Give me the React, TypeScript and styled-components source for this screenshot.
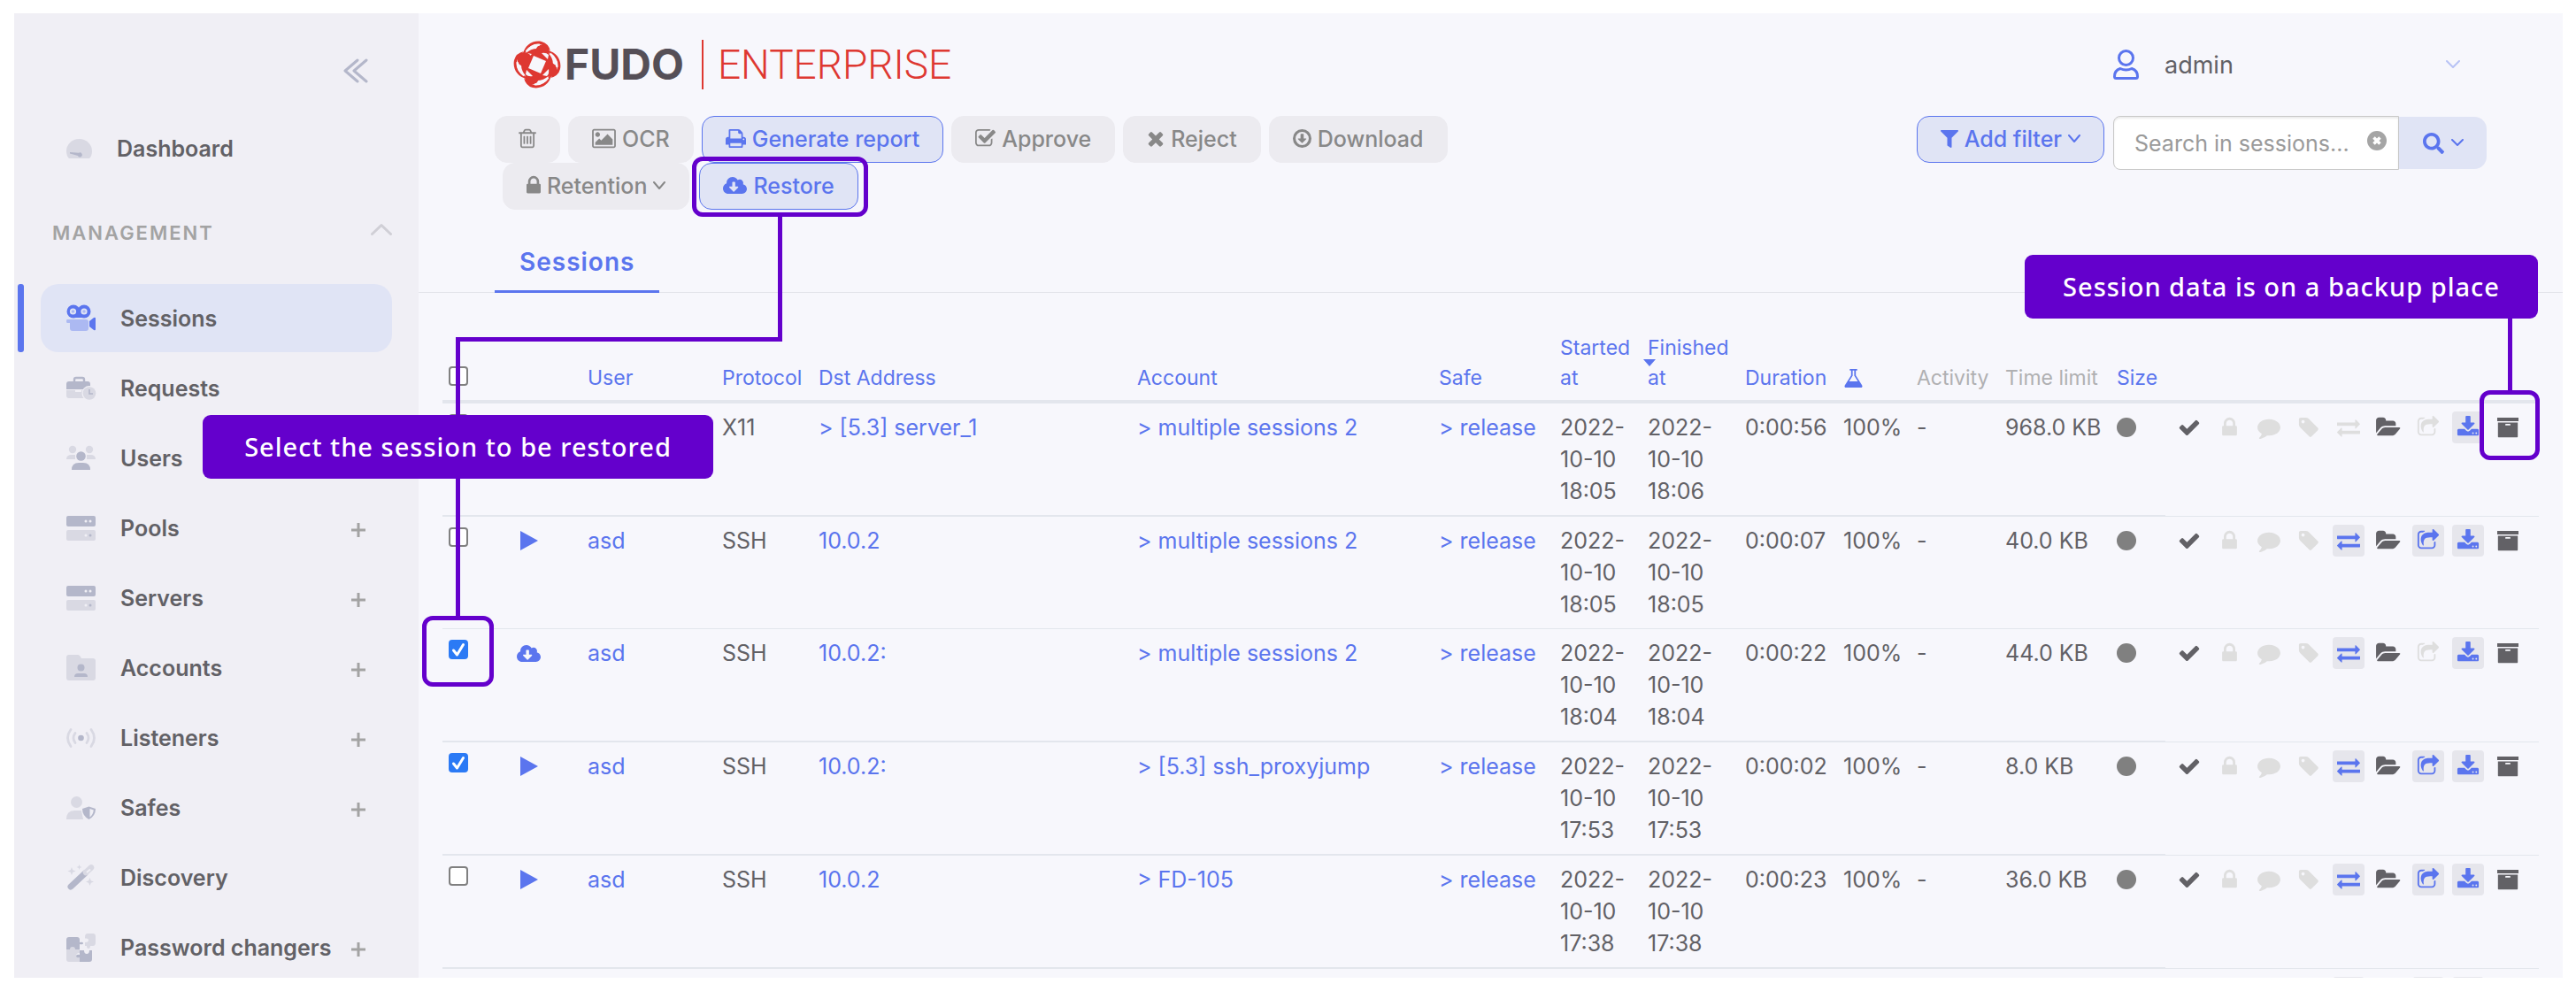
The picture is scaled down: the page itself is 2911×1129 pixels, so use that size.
import React from "react";
import styled, { createGlobalStyle, css } from "styled-components";
import { FaCloudDownloadAlt, FaFilter, FaSearch } from "react-icons/fa";

const c = {
  blue: "#5b75ee",
  blueSoft: "#e0e4f5",
  grayBtn: "#ecebf0",
  grayText: "#888888",
  text: "#626166",
  line: "#e3e6ed",
  panel: "#f7f7fc",
  side: "#f0eff5",
  iconA: "#b4b7ca",
  iconB: "#d9d9e3",
  mark: "#6400cc",
};

const GlobalStyle = createGlobalStyle`
  *, *::before, *::after { box-sizing: border-box; }
  body {
    margin: 0;
    background: #fff;
    color: ${c.text};
    font-family: Inter, "Liberation Sans", sans-serif;
    font-size: 25px;
  }
  button, input { font: inherit; }
  a { color: ${c.blue}; text-decoration: none; }
  svg { display: block; flex: none; }
`;

const Page = styled.div`
  height: 100vh;
  padding: 15px 15px 24px 16px;
`;

const Frame = styled.div`
  position: relative;
  display: flex;
  height: 100%;
  overflow: hidden;
  background: ${c.panel};
`;

/* ---------- glyphs ---------- */

const glyphs = {
  trash: { x: 192, w: 1408, d: "M704 736v576q0 14-9 23t-23 9h-64q-14 0-23-9t-9-23v-576q0-14 9-23t23-9h64q14 0 23 9t9 23zm256 0v576q0 14-9 23t-23 9h-64q-14 0-23-9t-9-23v-576q0-14 9-23t23-9h64q14 0 23 9t9 23zm256 0v576q0 14-9 23t-23 9h-64q-14 0-23-9t-9-23v-576q0-14 9-23t23-9h64q14 0 23 9t9 23zm128 724v-948h-896v948q0 22 7 40.5t14.5 27 10.5 8.5h832q3 0 10.5-8.5t14.5-27 7-40.5zm-672-1076h448l-48-117q-7-9-17-11h-317q-10 2-17 11zm928 32v64q0 14-9 23t-23 9h-96v948q0 83-47 143.5t-113 60.5h-832q-66 0-113-58.5t-47-141.5v-952h-96q-14 0-23-9t-9-23v-64q0-14 9-23t23-9h309l70-167q15-37 54-63t79-26h320q40 0 79 26t54 63l70 167h309q14 0 23 9t9 23z" },
  picture: { x: -64, w: 1920, d: "M576 576q0 80-56 136t-136 56-136-56-56-136 56-136 136-56 136 56 56 136zm1024 384v448h-1408v-192l320-320 160 160 512-512zm96-704h-1600q-13 0-22.5 9.5t-9.5 22.5v1216q0 13 9.5 22.5t22.5 9.5h1600q13 0 22.5-9.5t9.5-22.5v-1216q0-13-9.5-22.5t-22.5-9.5zm160 32v1216q0 66-47 113t-113 47h-1600q-66 0-113-47t-47-113v-1216q0-66 47-113t113-47h1600q66 0 113 47t47 113z" },
  print: { x: 64, w: 1664, d: "M448 1536h896v-256h-896v256zm0-640h896v-384h-160q-40 0-68-28t-28-68v-160h-640v640zm1152 64q0-26-19-45t-45-19-45 19-19 45 19 45 45 19 45-19 19-45zm128 0v416q0 13-9.5 22.5t-22.5 9.5h-224v160q0 40-28 68t-68 28h-960q-40 0-68-28t-28-68v-160h-224q-13 0-22.5-9.5t-9.5-22.5v-416q0-79 56.5-135.5t135.5-56.5h64v-544q0-40 28-68t68-28h672q40 0 88 20t76 48l152 152q28 28 48 76t20 88v256h64q79 0 135.5 56.5t56.5 135.5z" },
  approve: { x: 64, w: 1664, d: "M1472 930v318q0 119-84.5 203.5t-203.5 84.5h-832q-119 0-203.5-84.5t-84.5-203.5v-832q0-119 84.5-203.5t203.5-84.5h832q63 0 117 25 15 7 18 23 3 17-9 29l-49 49q-10 10-23 10-3 0-9-2-23-6-45-6h-832q-66 0-113 47t-47 113v832q0 66 47 113t113 47h832q66 0 113-47t47-113v-254q0-13 9-22l64-64q10-10 23-10 6 0 12 3 20 8 20 29zm231-489l-814 814q-24 24-57 24t-57-24l-430-430q-24-24-24-57t24-57l110-110q24-24 57-24t57 24l263 263 647-647q24-24 57-24t57 24l110 110q24 24 24 57t-24 57z" },
  times: { x: 192, w: 1408, d: "M1490 1322q0 40-28 68l-136 136q-28 28-68 28t-68-28l-294-294-294 294q-28 28-68 28t-68-28l-136-136q-28-28-28-68t28-68l294-294-294-294q-28-28-28-68t28-68l136-136q28-28 68-28t68 28l294 294 294-294q28-28 68-28t68 28l136 136q28 28 28 68t-28 68l-294 294 294 294q28 28 28 68z" },
  circleDown: { x: 128, w: 1536, d: "M896 128a768 768 0 1 1 0 1536a768 768 0 1 1 0-1536zM896 352a544 544 0 1 0 0 1088a544 544 0 1 0 0-1088zM800 512h192q32 0 32 32v352h192q30 0 28 26l-8 20-320 320q-20 20-48 0l-320-320-8-20q0-26 28-26h192v-352q0-32 32-32z" },
  lock: { x: 320, w: 1152, d: "M640 768h512v-192q0-106-75-181t-181-75-181 75-75 181v192zm832 96v576q0 40-28 68t-68 28h-960q-40 0-68-28t-28-68v-576q0-40 28-68t68-28h32v-192q0-184 132-316t316-132 316 132 132 316v192h32q40 0 68 28t28 68z" },
  flask: { x: 64, w: 1664, d: "M1591 1448q56 89 21.5 152.5t-140.5 63.5h-1152q-106 0-140.5-63.5t21.5-152.5l503-793v-399h-64q-26 0-45-19t-19-45 19-45 45-19h512q26 0 45 19t19 45-19 45-45 19h-64v399zm-779-725l-272 429h712l-272-429-20-31v-436h-128v436z" },
  check: { x: 0, w: 1792, d: "M1671 566q0 40-28 68l-724 724-136 136q-28 28-68 28t-68-28l-136-136-362-362q-28-28-28-68t28-68l136-136q28-28 68-28t68 28l294 295 656-657q28-28 68-28t68 28l136 136q28 28 28 68z" },
  comment: { x: 0, w: 1792, d: "M1792 896q0 174-120 321.5t-326 233-450 85.5q-70 0-145-8-198 175-460 242-49 14-114 22-17 2-30.5-9t-17.5-29v-1q-3-4-.5-12t2-10 4.5-9.5l6-9 7-8.5 8-9q7-8 31-34.5t34.5-38 31-39.5 32.5-51 27-59 26-76q-157-89-247.5-220t-90.5-281q0-130 71-248.5t191-204.5 286-136.5 348-50.5q244 0 450 85.5t326 233 120 321.5z" },
  tag: { x: 64, w: 1664, d: "M576 448q0-53-37.5-90.5t-90.5-37.5-90.5 37.5-37.5 90.5 37.5 90.5 90.5 37.5 90.5-37.5 37.5-90.5zm1067 576q0 53-37 90l-491 492q-39 37-91 37-53 0-90-37l-715-716q-38-37-64.5-101t-26.5-117v-416q0-52 38-90t90-38h416q53 0 117 26.5t102 64.5l715 714q37 39 37 91z" },
  exchange: { x: 0, w: 1792, d: "M1792 1184v192q0 13-9.5 22.5t-22.5 9.5h-1376v192q0 13-9.5 22.5t-22.5 9.5q-12 0-24-10l-319-320q-9-9-9-22 0-14 9-23l320-320q9-9 23-9 13 0 22.5 9.5t9.5 22.5v192h1376q13 0 22.5 9.5t9.5 22.5zm0-544q0 14-9 23l-320 320q-9 9-23 9-13 0-22.5-9.5t-9.5-22.5v-192h-1376q-13 0-22.5-9.5t-9.5-22.5v-192q0-13 9.5-22.5t22.5-9.5h1376v-192q0-14 9-23t23-9q12 0 24 10l319 319q9 9 9 23z" },
  folder: { x: 0, w: 1920, d: "M1879 952q0 31-31 66l-336 396q-43 51-120.5 86.5t-143.5 35.5h-1088q-34 0-60.5-13t-26.5-43q0-31 31-66l336-396q43-51 120.5-86.5t143.5-35.5h1088q34 0 60.5 13t26.5 43zm-343-344v160h-832q-94 0-197 47.5t-164 119.5l-337 396-5 6q0-4-.5-12.5t-.5-12.5v-960q0-92 66-158t158-66h320q92 0 158 66t66 158v32h544q92 0 158 66t66 158z" },
  share: { x: 0, w: 1792, d: "M1472 989v259q0 119-84.5 203.5t-203.5 84.5h-832q-119 0-203.5-84.5t-84.5-203.5v-832q0-119 84.5-203.5t203.5-84.5h255q13 0 22.5 9.5t9.5 22.5q0 27-26 32-77 26-133 60-10 4-16 4h-112q-66 0-113 47t-47 113v832q0 66 47 113t113 47h832q66 0 113-47t47-113v-214q0-19 18-29 28-13 54-37 16-16 35-8 21 9 21 31zm237-496l-384 384q-18 19-45 19-12 0-25-5-39-17-39-59v-192h-160q-323 0-438 131-119 137-74 473 3 23-20 34-8 2-12 2-16 0-26-13-10-14-21-31t-39.5-68.5-49.5-99.5-38.5-114-17.5-122q0-49 3.5-91t14-90 28-88 47-81.5 68.5-74 94.5-61.5 124.5-48.5 159.5-30.5 196.5-11h160v-192q0-42 39-59 13-5 25-5 26 0 45 19l384 384q19 19 19 45t-19 45z" },
  download: { x: 0, w: 1792, d: "M1344 1344q0-26-19-45t-45-19-45 19-19 45 19 45 45 19 45-19 19-45zm256 0q0-26-19-45t-45-19-45 19-19 45 19 45 45 19 45-19 19-45zm128-224v320q0 40-28 68t-68 28h-1472q-40 0-68-28t-28-68v-320q0-40 28-68t68-28h465l135 136q58 56 136 56t136-56l136-136h464q40 0 68 28t28 68zm-325-569q17 41-14 70l-448 448q-18 19-45 19t-45-19l-448-448q-31-29-14-70 17-39 59-39h256v-448q0-26 19-45t45-19h256q26 0 45 19t19 45v448h256q42 0 59 39z" },
  archive: { x: 64, w: 1664, d: "M96 128h1600q40 0 40 40v210q0 40-40 40h-1600q-40 0-40-40v-210q0-40 40-40zM120 520h1552v1112q0 48-48 48h-1456q-48 0-48-48zM730 620q-36 0-36 60t36 60h332q36 0 36-60t-36-60z" },
};
type GlyphName = keyof typeof glyphs;

function Glyph({ name, size = 25 }: { name: GlyphName; size?: number }) {
  const g = glyphs[name];
  return (
    <svg width={Math.round((g.w / 1792) * size)} height={size} viewBox={`${g.x} 0 ${g.w} 1792`} fill="currentColor" fillRule="evenodd" aria-hidden>
      <path d={g.d} />
    </svg>
  );
}

function Chevron({ w, h, stroke = 2, up = false }: { w: number; h: number; stroke?: number; up?: boolean }) {
  const s = stroke / 2;
  const pts = up ? `${s},${h - s} ${w / 2},${s + 1} ${w - s},${h - s}` : `${s},${s} ${w / 2},${h - s - 1} ${w - s},${s}`;
  return (
    <svg width={w} height={h} fill="none" stroke="currentColor" strokeWidth={stroke} strokeLinecap="round" strokeLinejoin="round" aria-hidden>
      <polyline points={pts} />
    </svg>
  );
}

/* ---------- sidebar ---------- */

const Sidebar = styled.aside`
  flex: none;
  width: 457px;
  background: ${c.side};
`;

const Collapse = styled.button`
  display: block;
  margin: 51px 57px 0 auto;
  padding: 0;
  border: 0;
  background: none;
  color: ${c.iconA};
`;

const DashLink = styled.a`
  display: flex;
  align-items: center;
  height: 60px;
  margin: 44px 30px 0;
  padding-left: 29px;
  gap: 28px;
  color: ${c.text};
  font-weight: 600;
`;

const GroupTitle = styled.button`
  display: flex;
  align-items: center;
  justify-content: space-between;
  width: 100%;
  height: 60px;
  margin-top: 35px;
  padding: 0 30px 0 43px;
  border: 0;
  background: none;
  color: #a3a3a3;
  font-size: 22px;
  font-weight: 600;
  letter-spacing: 2px;
  svg { color: #d0cfd6; margin-bottom: 8px; }
`;

const NavList = styled.ul`
  display: flex;
  flex-direction: column;
  gap: 2px;
  margin: 28px 0 0;
  padding: 0 30px 0 4px;
  list-style: none;
`;

const NavItem = styled.li<{ $active?: boolean }>`
  display: flex;
  align-items: center;
  height: 77px;
  padding: 0 30px 0 26px;
  border-radius: 20px;
  ${(p) => p.$active && css`
    position: relative;
    margin-left: 26px;
    padding-left: 0;
    background: ${c.blueSoft};
    &::before {
      content: "";
      position: absolute;
      left: -26px;
      width: 7px;
      height: 100%;
      border-radius: 3px;
      background: ${c.blue};
    }
  `}
`;

const NavLink = styled.a`
  display: flex;
  flex: 1;
  align-items: center;
  gap: 28px;
  padding-left: 29px;
  color: ${c.text};
  font-weight: 600;
  white-space: nowrap;
`;

const Plus = styled.button`
  padding: 4px 0 0;
  border: 0;
  background: none;
  color: #a3a3a3;
`;

const A = c.iconA;
const B = c.iconB;
const serverIcon = (
  <>
    <rect width="33" height="12" rx="2" y="0" fill={A} />
    <rect width="33" height="12" rx="2" y="16" fill={B} />
    <g fill="#f0eff5"><circle cx="22" cy="6" r="1.5" /><circle cx="27" cy="6" r="1.5" /><circle cx="22" cy="22" r="1.5" /></g>
    <circle cx="27" cy="22" r="1.5" fill={A} />
  </>
);

const navIcons: Record<string, [number, React.ReactNode]> = {
  Sessions: [29, <>
    <circle cx="8" cy="7" r="7.5" fill={c.blue} /><circle cx="20" cy="7" r="7.5" fill={c.blue} />
    <rect x="6" y="6" width="16" height="8" fill={c.blue} />
    <circle cx="7.5" cy="7" r="3.6" fill={c.blueSoft} /><circle cx="20" cy="7" r="3.6" fill={c.blueSoft} />
    <circle cx="7.5" cy="7" r="1.8" fill="#acb9f2" /><circle cx="20" cy="7" r="1.8" fill="#acb9f2" />
    <path d="M1 16h21q3 0 3 3v7q0 3-3 3h-15q-3 0-3-3v-6h-3q-1 0-1-2t1-2z" fill="#acb9f2" />
    <path d="M26 18l5-4q2-1 2 1v12q0 2-2 1l-5-4z" fill={c.blue} />
  </>],
  Requests: [26, <>
    <path d="M9 6v-3a2 2 0 0 1 2-2h7a2 2 0 0 1 2 2v3" fill="none" stroke={A} strokeWidth="2.4" />
    <path d="M0 8q0-3 3-3h21q3 0 3 3v6h-27z" fill={A} />
    <path d="M0 15h10v2h7v-2h3q-2 4 0 9h-17q-3 0-3-3z" fill={B} />
    <circle cx="26" cy="18.500" r="8.500" fill="#f0eff5" /><circle cx="26" cy="18.500" r="7.300" fill={B} />
    <path d="M26 14v5h4" fill="none" stroke={A} strokeWidth="1.6" />
  </>],
  Users: [27, <>
    <g fill={B}><circle cx="7" cy="4" r="4.200" /><circle cx="26" cy="4" r="4.200" /><path d="M0 15q0-5 6-5h4v5zM33 15q0-5-6-5h-4v5z" /></g>
    <circle cx="16.500" cy="11.500" r="6.500" fill="#f0eff5" />
    <circle cx="16.500" cy="11.500" r="5.300" fill={A} />
    <path d="M6 27q0-8 8-8h5q8 0 8 8z" fill={A} />
  </>],
  Pools: [28, serverIcon],
  Servers: [28, serverIcon],
  Accounts: [29, <>
    <path d="M0 3q0-3 3-3h10q2 0 4 4h13q3 0 3 3v19q0 3-3 3h-27q-3 0-3-3z" fill={B} />
    <circle cx="16.500" cy="14.500" r="4" fill={A} /><path d="M9 25q0-4 4-4h7q4 0 4 4z" fill={A} />
  </>],
  Listeners: [22, <>
    <circle cx="16.500" cy="11" r="3.300" fill={A} />
    <g fill="none" stroke={B} strokeWidth="2.800" strokeLinecap="round">
      <path d="M5 1.500q-7 9.500 0 19M28 1.500q7 9.500 0 19M10 5.500q-4 5.500 0 11M23 5.500q4 5.500 0 11" />
    </g>
  </>],
  Safes: [26, <>
    <circle cx="11.500" cy="6.500" r="6.500" fill={B} /><path d="M0 26q0-10 9-10h8l2 10z" fill={B} />
    <path d="M25.500 10l8.500 3q0 10-8.500 14q-8.500-4-8.500-14z" fill="#f0eff5" />
    <path d="M25.500 11.500l7.500 2.500q0 8-7.500 12q-7.500-4-7.500-12z" fill={A} /><path d="M26.500 14l4.300 1.500q-.5 5-4.300 8z" fill="#f0eff5" />
  </>],
  Discovery: [29, <>
    <path d="M5 25l16-15" stroke={A} strokeWidth="7" strokeLinecap="round" /><path d="M21 4l8 8" stroke="#f0eff5" strokeWidth="2" />
    <path d="M22 9l6-5.500" stroke={B} strokeWidth="6.500" strokeLinecap="round" /><path d="M23 9l4-3.500" stroke="#f0eff5" strokeWidth="2" />
    <path d="M6 3l1.300 3.200 3.200 1.300-3.200 1.300-1.300 3.200-1.300-3.200-3.200-1.300 3.200-1.300zM14.500 0l.8 2.200 2.200.8-2.200.8-.8 2.200-.8-2.200-2.200-.8 2.200-.8zM26.500 15l1.300 3.200 3.200 1.300-3.200 1.300-1.300 3.200-1.300-3.200-3.200-1.300 3.200-1.300z" fill={B} />
  </>],
  "Password changers": [32, <>
    <path d="M3 4h9q3 0 3 3v3q4-1 4 1t-4 1v6h-15v-11q0-3 3-3z" fill={A} />
    <path d="M0 18h4q0-3 3-3t3 3h5v4q-4 0-4 3t4 2v5h-12q-3 0-3-3z" fill={B} />
    <path d="M15 19h5q0 4 3 4t3-4h3v10q0 3-3 3h-11v-5q-4 1-4-1.500t4-1.500z" fill={A} />
    <path d="M21 4q0-4 3-4h6q3 0 3 3v7q0 4-3 4h-3q0 3-2 3t-2-3h-2v-4q4 0 4-2.500t-4-2z" fill={B} />
  </>],
};

const navItems: [string, boolean][] = [
  ["Sessions", false], ["Requests", false], ["Users", false], ["Pools", true], ["Servers", true], ["Accounts", true],
  ["Listeners", true], ["Safes", true], ["Discovery", false], ["Password changers", true],
];

function SideNav() {
  return (
    <Sidebar>
      <Collapse aria-label="Collapse menu">
        <svg width="28" height="28" fill="none" stroke="currentColor" strokeWidth="3" strokeLinecap="round" strokeLinejoin="round">
          <path d="M16 2L2 14l14 12M26 2L12 14l14 12" />
        </svg>
      </Collapse>
      <DashLink href="#dashboard">
        <svg width="29" height="22">
          <path d="M3 22q-3-3-3-8a14.500 14 0 0 1 29 0q0 5-3 8z" fill={B} />
          <path d="M4 15l10 .8a2.500 2.500 0 1 1-1 3.200l-9-2.500z" fill={A} />
        </svg>
        Dashboard
      </DashLink>
      <GroupTitle>
        MANAGEMENT
        <Chevron w={24} h={14} stroke={3} up />
      </GroupTitle>
      <NavList>
        {navItems.map(([name, plus]) => (
          <NavItem key={name} $active={name === "Sessions"}>
            <NavLink href={"#" + name.toLowerCase().replace(" ", "-")}>
              <svg width="33" height={navIcons[name][0]} overflow="visible">{navIcons[name][1]}</svg>
              {name}
            </NavLink>
            {plus && (
              <Plus aria-label={"Add to " + name}>
                <svg width="16" height="16" stroke="currentColor" strokeWidth="3"><path d="M0 8h16M8 0v16" /></svg>
              </Plus>
            )}
          </NavItem>
        ))}
      </NavList>
    </Sidebar>
  );
}

/* ---------- header ---------- */

const Main = styled.main`
  flex: 1;
  min-width: 0;
`;

const Header = styled.header`
  display: flex;
  align-items: center;
  justify-content: space-between;
  height: 116px;
  padding: 0 86px 0 107px;
`;

const Logo = styled.div`
  display: flex;
  align-items: center;
  line-height: 56px;
`;

const Brand = styled.span`
  margin-left: 4px;
  color: #554f57;
  font-size: 48px;
  font-weight: 700;
`;

const Edition = styled.span`
  margin-left: 20px;
  padding-left: 16px;
  border-left: 2px solid #de3831;
  color: #de3831;
  font-family: Roboto, "Liberation Sans", sans-serif;
  font-size: 46px;
  font-weight: 300;
`;

const Account = styled.button`
  display: flex;
  align-items: center;
  width: 422px;
  padding: 0 30px 0 0;
  border: 0;
  background: none;
  color: ${c.text};
  font-size: 27px;
  gap: 29px;
  > svg:first-child { color: ${c.blue}; }
  > svg:last-child { margin-left: auto; color: #b8c3f5; }
`;

function Emblem() {
  return (
    <svg width="54" height="54" viewBox="-27 -27 54 54" aria-hidden>
      <circle r="18" fill="#de3831" />
      {[0, 90, 180, 270].map((r) => (
        <g key={r} transform={`rotate(${r})`}>
          <circle cx="6" cy="-14.500" r="8" fill="#de3831" />
          <path d="M-16 -12C-14 -22 -5 -28 5 -26Q13 -24 15 -15Q9 -22.500 1 -23.500Q-8 -23.500 -12 -15z" fill="#de3831" />
          <path d="M-12.500 -15Q-8 -21.500 3 -22.500" stroke="#f7f7fc" strokeWidth="2" fill="none" />
          <path d="M-13 -5q-1-5 2-8l5 1z" fill="#f7f7fc" />
        </g>
      ))}
      <path d="M-4 -10L10 -4L4 10L-10 4z" fill="#f7f7fc" />
    </svg>
  );
}

/* ---------- toolbar ---------- */

const Toolbar = styled.div`
  display: flex;
  align-items: flex-start;
  justify-content: space-between;
  padding: 0 86px;
`;

const ButtonRow = styled.div<{ $indent?: boolean }>`
  display: flex;
  gap: ${(p) => (p.$indent ? 11 : 9)}px;
  padding-left: ${(p) => (p.$indent ? 9 : 0)}px;
`;

const ToolButton = styled.button<{ $primary?: boolean }>`
  display: flex;
  align-items: center;
  gap: 7px;
  height: 53px;
  padding: 0 26px 2px;
  border: 1px solid ${(p) => (p.$primary ? c.blue : c.grayBtn)};
  border-radius: 14px;
  background: ${(p) => (p.$primary ? c.blueSoft : c.grayBtn)};
  color: ${(p) => (p.$primary ? c.blue : c.grayText)};
  font-weight: 500;
  white-space: nowrap;
`;

const RightTools = styled.div`
  display: flex;
  align-items: flex-start;
  gap: 10px;
`;

const SearchForm = styled.form`
  display: flex;
  align-items: center;
  width: 422px;
`;

const SearchBox = styled.div`
  display: flex;
  flex: 1;
  align-items: center;
  min-width: 0;
  height: 61px;
  padding: 0 13px 0 23px;
  border: 1px solid #c8c8c8;
  border-radius: 8px 0 0 8px;
  background: #fff;
  box-shadow: inset 0 2px 2px #ececec;
`;

const SearchInput = styled.input`
  flex: 1;
  min-width: 0;
  padding: 0;
  border: 0;
  outline: 0;
  background: none;
  &::placeholder { color: #9a9a9a; opacity: 1; }
`;

const ClearButton = styled.button`
  padding: 0 0 6px;
  border: 0;
  background: none;
`;

const SearchButton = styled.button`
  display: flex;
  align-items: center;
  justify-content: center;
  gap: 8px;
  width: 99px;
  height: 59px;
  border: 0;
  border-radius: 0 14px 14px 0;
  background: ${c.blueSoft};
  color: ${c.blue};
`;

const Tabs = styled.nav`
  display: flex;
  margin-top: 41px;
  padding-left: 86px;
  box-shadow: inset 0 -1px #e3e4ea;
`;

const Tab = styled.a`
  padding: 0 28px 13px;
  border-bottom: 3px solid ${c.blue};
  font-size: 28px;
  font-weight: 600;
  line-height: 37px;
  letter-spacing: 1px;
`;

/* ---------- table ---------- */

const TableWrap = styled.div`
  padding: 0 27px;
`;

const Table = styled.table`
  width: 100%;
  table-layout: fixed;
  border-spacing: 0;
  line-height: 36px;
`;

const Th = styled.th<{ $muted?: boolean }>`
  position: relative;
  padding: 45px 0 8px 7px;
  border-bottom: 4px solid ${c.line};
  color: ${(p) => (p.$muted ? "#b0b0b2" : c.blue)};
  font-size: 23px;
  font-weight: 400;
  line-height: 34px;
  text-align: left;
  vertical-align: bottom;
  white-space: nowrap;
`;

const HeadIcon = styled.div`
  display: flex;
  align-items: center;
  height: 34px;
`;

const SortMark = styled.span`
  position: absolute;
  left: 2px;
  bottom: 38px;
  border: 7px solid transparent;
  border-top: 8px solid ${c.blue};
  border-bottom: 0;
`;

const Row = styled.tr`
  td { border-bottom: 2px solid ${c.line}; }
  &:nth-child(2) td { border-bottom-width: 1px; }
  td:last-child { border-bottom-width: 1px; }
`;

const Td = styled.td`
  padding: 9px 7px;
  vertical-align: top;
`;

const State = styled.div`
  display: flex;
  align-items: center;
  height: 36px;
  padding-left: 1px;
  color: ${c.blue};
`;

const Dot = styled.span`
  display: block;
  width: 22px;
  height: 22px;
  margin-top: 7px;
  border-radius: 50%;
  background: #808080;
`;

const Actions = styled.div`
  display: flex;
  gap: 9px;
  padding-left: 2px;
`;

const Action = styled.button<{ $tone: "dark" | "off" | "on" }>`
  display: flex;
  align-items: center;
  justify-content: center;
  width: 36px;
  height: 36px;
  padding: 0;
  border: 0;
  border-radius: 4px;
  background: ${(p) => (p.$tone === "on" ? "#e6e6ec" : "transparent")};
  color: ${(p) => ({ dark: c.text, off: "#dedede", on: c.blue })[p.$tone]};
`;

const CheckLabel = styled.label`
  position: relative;
  display: block;
  width: 22px;
  height: 22px;
  margin: 3px 0 8px;
  svg { position: absolute; inset: 0; pointer-events: none; }
`;

const CheckInput = styled.input`
  appearance: none;
  display: block;
  width: 22px;
  height: 22px;
  margin: 0;
  border: 2px solid #808080;
  border-radius: 4px;
  background: #fff;
  &:checked { border-color: #2b7af5; background: #2b7af5; }
`;

function Check({ label, on = false }: { label: string; on?: boolean }) {
  return (
    <CheckLabel>
      <CheckInput type="checkbox" aria-label={label} defaultChecked={on} />
      {on && (
        <svg width="22" height="22" fill="none" stroke="#fff" strokeWidth="3" strokeLinecap="round" strokeLinejoin="round">
          <path d="M5.500 12l4 5L16.500 5.500" />
        </svg>
      )}
    </CheckLabel>
  );
}

type Session = {
  on?: boolean; state?: "play" | "cloud"; user?: string; proto: string; dst: string; account: string;
  start: string; end: string; dur: string; size: string; live?: boolean; shared?: boolean;
};

const sessions: Session[] = [
  { proto: "X11", dst: "> [5.3] server_1", account: "> multiple sessions 2", start: "2022-10-10 18:05", end: "2022-10-10 18:06", dur: "0:00:56", size: "968.0 KB" },
  { state: "play", user: "asd", proto: "SSH", dst: "10.0.2", account: "> multiple sessions 2", start: "2022-10-10 18:05", end: "2022-10-10 18:05", dur: "0:00:07", size: "40.0 KB", live: true, shared: true },
  { on: true, state: "cloud", user: "asd", proto: "SSH", dst: "10.0.2:", account: "> multiple sessions 2", start: "2022-10-10 18:04", end: "2022-10-10 18:04", dur: "0:00:22", size: "44.0 KB", live: true },
  { on: true, state: "play", user: "asd", proto: "SSH", dst: "10.0.2:", account: "> [5.3] ssh_proxyjump", start: "2022-10-10 17:53", end: "2022-10-10 17:53", dur: "0:00:02", size: "8.0 KB", live: true, shared: true },
  { state: "play", user: "asd", proto: "SSH", dst: "10.0.2", account: "> FD-105", start: "2022-10-10 17:38", end: "2022-10-10 17:38", dur: "0:00:23", size: "36.0 KB", live: true, shared: true },
];

const columns: (number | undefined)[] = [76, 81, 152, 109, 360, undefined, 137, 99, 110, 111, 83, 100, 126, 62, 422];

function ActionBar({ live, shared }: { live?: boolean; shared?: boolean }) {
  const list: [GlyphName, "dark" | "off" | "on", string][] = [
    ["check", "dark", "Approve"], ["lock", "off", "Lock"], ["comment", "off", "Comment"], ["tag", "off", "Tag"],
    ["exchange", live ? "on" : "off", "Transfer"], ["folder", "dark", "Open"],
    ["share", shared ? "on" : "off", "Share"], ["download", "on", "Download"], ["archive", "dark", "Archived"],
  ];
  return (
    <Actions>
      {list.map(([name, tone, label]) => (
        <Action key={name} $tone={tone} aria-label={label}>
          <Glyph name={name} size={26} />
        </Action>
      ))}
    </Actions>
  );
}

function SessionTable() {
  return (
    <TableWrap>
      <Table>
        <colgroup>{columns.map((w, i) => <col key={i} width={w} />)}</colgroup>
        <thead>
          <tr>
            <Th><Check label="Select all sessions" /></Th>
            <Th />
            <Th>User</Th>
            <Th>Protocol</Th>
            <Th>Dst Address</Th>
            <Th>Account</Th>
            <Th>Safe</Th>
            <Th>Started<br />at</Th>
            <Th>Finished<br />at<SortMark /></Th>
            <Th>Duration</Th>
            <Th><HeadIcon><Glyph name="flask" /></HeadIcon></Th>
            <Th $muted>Activity</Th>
            <Th $muted>Time limit</Th>
            <Th>Size</Th>
            <Th />
          </tr>
        </thead>
        <tbody>
          {sessions.map((s, i) => (
            <Row key={i}>
              <Td><Check label={"Select session " + (i + 1)} on={s.on} /></Td>
              <Td>
                <State>
                  {s.state === "play" && <svg width="28" height="22"><path d="M4 0v22l20-11z" fill="currentColor" /></svg>}
                  {s.state === "cloud" && <FaCloudDownloadAlt size={27} />}
                </State>
              </Td>
              <Td>{s.user && <a href="#user">{s.user}</a>}</Td>
              <Td>{s.proto}</Td>
              <Td><a href="#server">{s.dst}</a></Td>
              <Td><a href="#account">{s.account}</a></Td>
              <Td><a href="#safe">&gt; release</a></Td>
              <Td>{s.start}</Td>
              <Td>{s.end}</Td>
              <Td>{s.dur}</Td>
              <Td>100%</Td>
              <Td>-</Td>
              <Td>{s.size}</Td>
              <Td><Dot /></Td>
              <Td><ActionBar live={s.live} shared={s.shared} /></Td>
            </Row>
          ))}
          <Row>
            <Td colSpan={14} />
            <Td><ActionBar live shared /></Td>
          </Row>
        </tbody>
      </Table>
    </TableWrap>
  );
}

/* ---------- annotations over the page ---------- */

const Outline = styled.div<{ $w: number; $h: number; $top: number; $left?: number; $right?: number }>`
  position: absolute;
  top: ${(p) => p.$top}px;
  left: ${(p) => (p.$left === undefined ? "auto" : p.$left + "px")};
  right: ${(p) => (p.$right === undefined ? "auto" : p.$right + "px")};
  width: ${(p) => p.$w}px;
  height: ${(p) => p.$h}px;
  border: 5px solid ${c.mark};
  border-radius: 12px;
  pointer-events: none;
`;

const Wire = styled(Outline)`
  border: 0;
  border-radius: 0;
  background: ${c.mark};
`;

const Callout = styled(Outline)`
  display: flex;
  align-items: center;
  justify-content: center;
  padding-bottom: 2px;
  border: 0;
  border-radius: 9px;
  background: ${c.mark};
  color: #fff;
  font-family: "Noto Sans", "Open Sans", sans-serif;
  font-size: 29px;
  font-weight: 500;
  letter-spacing: 1px;
  white-space: nowrap;
`;

export default function App() {
  return (
    <Page>
      <GlobalStyle />
      <Frame>
        <SideNav />
        <Main>
          <Header>
            <Logo>
              <Emblem />
              <Brand>FUDO</Brand>
              <Edition>ENTERPRISE</Edition>
            </Logo>
            <Account>
              <svg width="29" height="34" fill="none" stroke="currentColor" strokeWidth="3">
                <ellipse cx="14.500" cy="9.500" rx="8" ry="8" />
                <path d="M8 21.500q6.500 3 13 0q6.500 2 6.500 9q0 2-2 2h-22q-2 0-2-2q0-7 6.500-9z" strokeLinejoin="round" />
              </svg>
              admin
              <Chevron w={16} h={10} />
            </Account>
          </Header>
          <Toolbar>
            <div>
              <ButtonRow>
                <ToolButton aria-label="Delete"><Glyph name="trash" /></ToolButton>
                <ToolButton><Glyph name="picture" />OCR</ToolButton>
                <ToolButton $primary><Glyph name="print" />Generate report</ToolButton>
                <ToolButton><Glyph name="approve" />Approve</ToolButton>
                <ToolButton><Glyph name="times" />Reject</ToolButton>
                <ToolButton><Glyph name="circleDown" />Download</ToolButton>
              </ButtonRow>
              <ButtonRow $indent>
                <ToolButton><Glyph name="lock" />Retention<Chevron w={14} h={10} /></ToolButton>
                <ToolButton $primary><FaCloudDownloadAlt size={27} />Restore</ToolButton>
              </ButtonRow>
            </div>
            <RightTools>
              <ToolButton $primary><FaFilter size={20} />Add filter<Chevron w={14} h={10} /></ToolButton>
              <SearchForm onSubmit={(e) => e.preventDefault()}>
                <SearchBox>
                  <SearchInput aria-label="Search" placeholder="Search in sessions..." />
                  <ClearButton type="button" aria-label="Clear search">
                    <svg width="22" height="22"><circle cx="11" cy="11" r="11" fill="#a5a5a5" /><path d="M7.500 7.500l7 7M14.500 7.500l-7 7" stroke="#fff" strokeWidth="3.500" /></svg>
                  </ClearButton>
                </SearchBox>
                <SearchButton aria-label="Run search"><FaSearch size={24} /><Chevron w={14} h={9} /></SearchButton>
              </SearchForm>
            </RightTools>
          </Toolbar>
          <Tabs><Tab href="#sessions">Sessions</Tab></Tabs>
          <SessionTable />
        </Main>

        <Outline $left={766} $top={162} $w={199} $h={68} />
        <Wire $left={863} $top={230} $w={5} $h={141} />
        <Wire $left={499} $top={366} $w={369} $h={5} />
        <Wire $left={499} $top={366} $w={5} $h={315} />
        <Outline $left={461} $top={681} $w={81} $h={80} />
        <Callout $left={213} $top={454} $w={577} $h={72}>Select the session to be restored</Callout>
        <Outline $right={26} $top={426} $w={68} $h={79} />
        <Wire $right={57} $top={345} $w={5} $h={82} />
        <Callout $right={28} $top={273} $w={580} $h={72}>Session data is on a backup place</Callout>
      </Frame>
    </Page>
  );
}
